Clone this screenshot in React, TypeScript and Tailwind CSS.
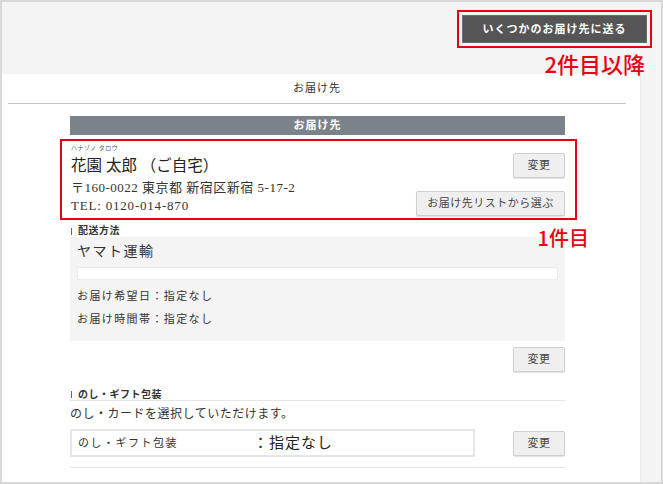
import React from "react";

const serif = { fontFamily: '"Liberation Serif", "Noto Sans CJK JP", serif' };
const sans = { fontFamily: '"Noto Sans CJK JP", "Noto Sans", sans-serif' };

function GrayButton({ label, className = "" }: { label: string; className?: string }) {
  return (
    <button
      className={`h-[25px] rounded-[2px] border border-[#cfcfcf] bg-[#efefef] text-[11px] tracking-[0.5px] text-[#444] shadow-[0_1px_1px_rgba(0,0,0,0.12)] ${className}`}
      style={serif}
    >
      {label}
    </button>
  );
}

function SectionLabel({ text, className = "" }: { text: string; className?: string }) {
  return (
    <div className={`flex items-center text-[10px] font-bold text-[#333] ${className}`}>
      <span className="ml-px mr-[6px] h-[7px] w-px bg-[#666]" />
      <span className="tracking-[0.5px]">{text}</span>
    </div>
  );
}

export default function App() {
  return (
    <div
      className="flex h-[484px] w-[663px] flex-col overflow-hidden border-2 border-[#d8d8d8] bg-[#f4f4f4] text-[#333]"
      style={serif}
    >
      {/* top toolbar */}
      <div className="relative flex h-[72px] shrink-0 items-start justify-end pr-[9px] pt-[8px]">
        <div className="border-2 border-[#e60012] p-[3px]">
          <button
            className="h-[28px] w-[185px] border border-[#6a6a6a] bg-[#555555] text-[11px] font-bold tracking-[1px] text-white"
            style={serif}
          >
            いくつかのお届け先に送る
          </button>
        </div>
        <span
          className="absolute right-[16px] top-[49px] text-[22px] font-medium leading-[24px] text-[#e60012]"
          style={sans}
        >
          2件目以降
        </span>
      </div>

      <div className="flex min-h-0 flex-1">
        {/* main panel */}
        <div className="flex w-[638px] flex-col bg-white">
          <div className="ml-[6px] mr-[14px] flex h-[30px] items-center justify-center border-b border-[#c4c4c4] text-[11px] tracking-[1px]">
            お届け先
          </div>

          <div className="ml-[68px] flex w-[495px] flex-col">
            <div className="mt-[12px] flex h-[19px] items-center justify-center bg-[#7b838a] text-[11px] font-bold tracking-[1px] text-white">
              お届け先
            </div>

            {/* first address */}
            <div className="relative ml-[-10px] mt-[4px] flex h-[81px] w-[517px] justify-between border-2 border-[#e60012] pl-[9px] pr-[10px]">
              <div className="flex flex-col">
                <div className="mt-[3px] h-[8px] text-[6px] leading-[8px] tracking-[0.5px] text-[#555]">
                  ハナゾノ タロウ
                </div>
                <div className="mt-[3px] h-[22px] text-[15.5px] leading-[22px] text-[#222]">
                  花園 太郎 （ご自宅）
                </div>
                <div className="mt-[2px] h-[18px] text-[13px] leading-[18px] tracking-[0.5px]">
                  〒160-0022 東京都 新宿区新宿 5-17-2
                </div>
                <div className="h-[18px] text-[13px] leading-[18px] tracking-[0.8px]">
                  TEL: 0120-014-870
                </div>
              </div>
              <div className="flex flex-col items-end gap-[13px] pt-[12px]">
                <GrayButton label="変更" className="w-[52px]" />
                <GrayButton label="お届け先リストから選ぶ" className="w-[149px]" />
              </div>
              <span
                className="absolute right-[-14px] top-[86px] text-[20px] font-medium leading-[22px] text-[#e60012]"
                style={sans}
              >
                1件目
              </span>
            </div>

            {/* delivery method */}
            <SectionLabel text="配送方法" className="mt-[5px] h-[12px] leading-[12px]" />
            <div className="flex h-[104px] flex-col bg-[#f4f4f4] px-[7px]">
              <div className="mt-[5px] text-[14px] leading-[20px] tracking-[1.5px] text-[#333]">
                ヤマト運輸
              </div>
              <div className="mt-[5px] h-[13px] border border-[#ebebeb] bg-white" />
              <div className="mt-[6px] text-[11px] leading-[20px] tracking-[1.4px]">
                お届け希望日：指定なし
              </div>
              <div className="mt-[3px] text-[11px] leading-[20px] tracking-[1.4px]">
                お届け時間帯：指定なし
              </div>
            </div>
            <GrayButton label="変更" className="mt-[6px] w-[52px] self-end" />

            {/* gift wrapping */}
            <SectionLabel
              text="のし・ギフト包装"
              className="mt-[16px] h-[13px] border-b border-[#e6e6e6] leading-[13px]"
            />
            <div className="mt-[3px] text-[12px] leading-[20px] tracking-[0.5px]">
              のし・カードを選択していただけます。
            </div>
            <div className="mt-[5px] flex items-center justify-between">
              <div className="flex h-[28px] w-[405px] items-center border-2 border-[#e6e6e6] pl-[6px]">
                <span className="w-[175px] text-[11px] tracking-[1.5px]">のし・ギフト包装</span>
                <span className="text-[15px] tracking-[1px] text-[#222]">：指定なし</span>
              </div>
              <GrayButton label="変更" className="w-[52px]" />
            </div>
            <div className="mt-[10px] h-px bg-[#e6e6e6]" />
          </div>
        </div>

        {/* right gutter */}
        <div className="flex-1 border-l border-[#ebebeb] bg-[#f4f4f4]" />
      </div>
    </div>
  );
}
